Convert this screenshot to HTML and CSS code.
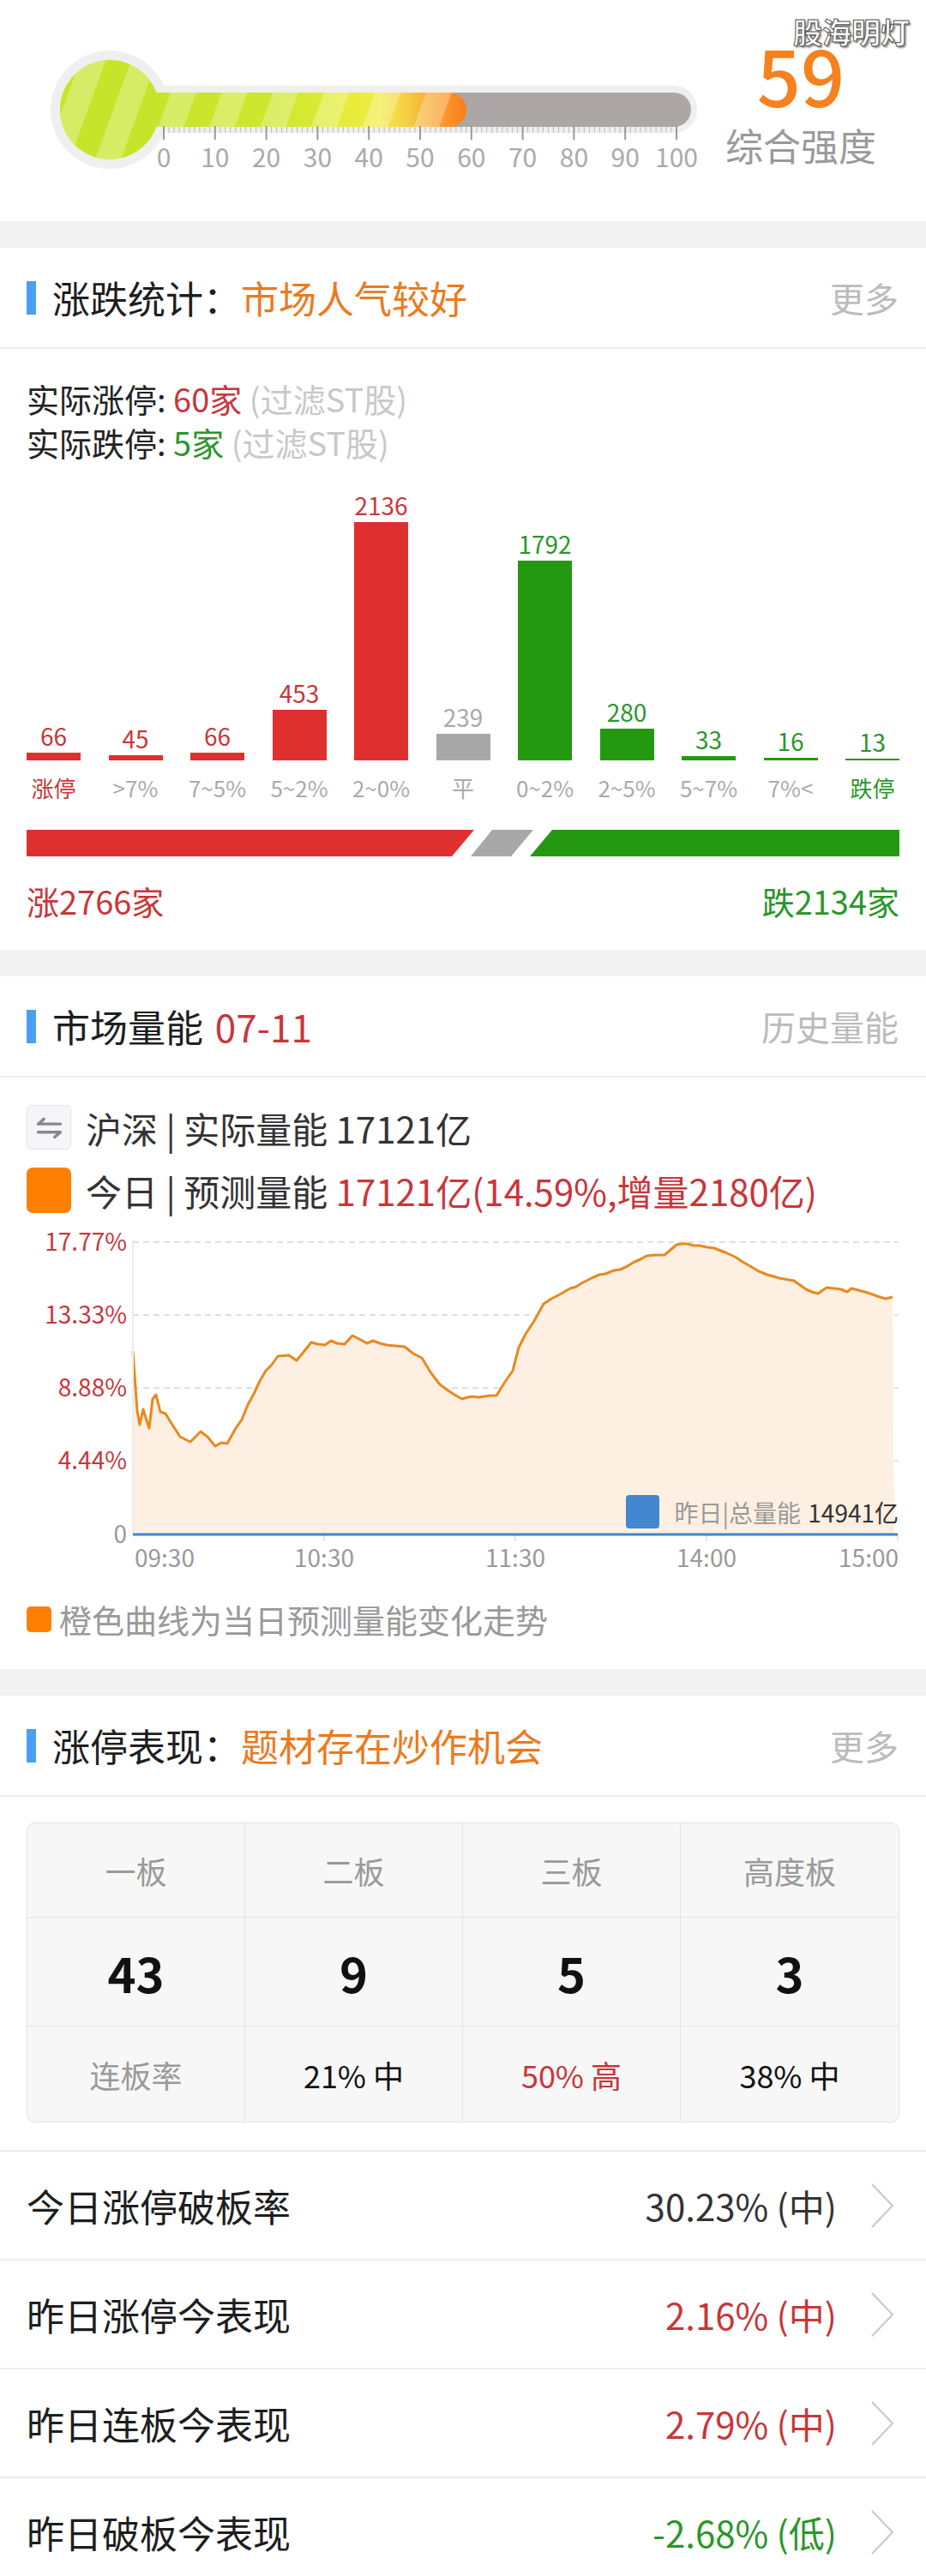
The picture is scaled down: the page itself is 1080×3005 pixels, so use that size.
FILE: index.html
```html
<!DOCTYPE html>
<html lang="zh-CN">
<head>
    <meta charset="UTF-8">
    <meta name="viewport" content="width=device-width, initial-scale=1.0">
    <title>市场情绪</title>
    <link rel="stylesheet" href="styles.css">
</head>
<body>
<div class="page">

    <!-- 综合强度 -->
    <section class="gauge">
        <svg class="thermo" viewBox="0 0 820 258">
            <defs>
                <linearGradient id="heat" x1="180" y1="0" x2="544" y2="0" gradientUnits="userSpaceOnUse">
                    <stop offset="0" stop-color="#c6e52a"/>
                    <stop offset="0.4" stop-color="#cde72d"/>
                    <stop offset="0.6" stop-color="#e4ec36"/>
                    <stop offset="0.72" stop-color="#f2eb44"/>
                    <stop offset="0.8" stop-color="#f5d245"/>
                    <stop offset="0.9" stop-color="#f8a432"/>
                    <stop offset="1" stop-color="#fb7c1b"/>
                </linearGradient>
                <pattern id="stripes" width="56" height="56" patternUnits="userSpaceOnUse" patternTransform="rotate(20)">
                    <rect width="28" height="56" fill="#fff" opacity="0.28"/>
                </pattern>
                <pattern id="ticks" x="190.5" y="0" width="5.98" height="8" patternUnits="userSpaceOnUse">
                    <rect width="1" height="8" fill="#bbb"/>
                </pattern>
            </defs>
            <circle cx="128" cy="128" r="69" fill="#efefef"/>
            <rect x="160" y="100" width="653" height="55" rx="27" fill="#efefef"/>
            <rect x="180" y="108" width="626" height="40" rx="20" fill="#aca6a6"/>
            <rect x="160" y="108" width="384" height="40" rx="20" fill="url(#heat)"/>
            <rect x="160" y="108" width="384" height="40" rx="20" fill="url(#stripes)"/>
            <circle cx="128" cy="128" r="58" fill="#c6e52a"/>
            <circle cx="128" cy="128" r="58" fill="url(#stripes)"/>
            <rect x="190" y="148" width="600" height="7" fill="url(#ticks)"/>
            <path d="M191 147v16M250.8 147v16M310.6 147v16M370.4 147v16M430.2 147v16M490 147v16M549.8 147v16M609.6 147v16M669.4 147v16M729.2 147v16M789 147v16" stroke="#999" stroke-width="2"/>
            <g class="thermo-num">
                <text x="191" y="195">0</text>
                <text x="250.8" y="195">10</text>
                <text x="310.6" y="195">20</text>
                <text x="370.4" y="195">30</text>
                <text x="430.2" y="195">40</text>
                <text x="490" y="195">50</text>
                <text x="549.8" y="195">60</text>
                <text x="609.6" y="195">70</text>
                <text x="669.4" y="195">80</text>
                <text x="729.2" y="195">90</text>
                <text x="789" y="195">100</text>
            </g>
        </svg>
        <div class="score">
            <div class="score-num">59</div>
            <div class="score-label">综合强度</div>
        </div>
        <div class="watermark">股海明灯</div>
    </section>

    <div class="gap"></div>

    <!-- 涨跌统计 -->
    <section class="card">
        <div class="card-head">
            <div class="card-title">涨跌统计：<span class="orange">市场人气较好</span></div>
            <div class="more">更多</div>
        </div>
        <div class="card-body updown">
            <p class="stat-line">实际涨停: <span class="red">60家</span> <span class="muted">(过滤ST股)</span></p>
            <p class="stat-line">实际跌停: <span class="green">5家</span> <span class="muted">(过滤ST股)</span></p>

            <div class="bars">
                <div class="bar-col"><span class="bar-num red">66</span><div class="bar up" style="height:9px"></div></div>
                <div class="bar-col"><span class="bar-num red">45</span><div class="bar up" style="height:6px"></div></div>
                <div class="bar-col"><span class="bar-num red">66</span><div class="bar up" style="height:9px"></div></div>
                <div class="bar-col"><span class="bar-num red">453</span><div class="bar up" style="height:59px"></div></div>
                <div class="bar-col"><span class="bar-num red">2136</span><div class="bar up" style="height:278px"></div></div>
                <div class="bar-col"><span class="bar-num gray">239</span><div class="bar flat" style="height:31px"></div></div>
                <div class="bar-col"><span class="bar-num green">1792</span><div class="bar down" style="height:233px"></div></div>
                <div class="bar-col"><span class="bar-num green">280</span><div class="bar down" style="height:37px"></div></div>
                <div class="bar-col"><span class="bar-num green">33</span><div class="bar down" style="height:5px"></div></div>
                <div class="bar-col"><span class="bar-num green">16</span><div class="bar down" style="height:3px"></div></div>
                <div class="bar-col"><span class="bar-num green">13</span><div class="bar down" style="height:2px"></div></div>
            </div>
            <div class="bar-labels">
                <span class="red">涨停</span>
                <span>&gt;7%</span>
                <span>7~5%</span>
                <span>5~2%</span>
                <span>2~0%</span>
                <span>平</span>
                <span>0~2%</span>
                <span>2~5%</span>
                <span>5~7%</span>
                <span>7%&lt;</span>
                <span class="green">跌停</span>
            </div>

            <svg class="ratio" viewBox="0 0 1018 31" preserveAspectRatio="none">
                <polygon points="0,0 522,0 496,31 0,31" fill="#e02f2f"/>
                <polygon points="543,0 591,0 565,31 518,31" fill="#a8a8a8"/>
                <polygon points="613,0 1018,0 1018,31 587,31" fill="#259812"/>
            </svg>

            <div class="totals">
                <span class="red">涨2766家</span>
                <span class="green">跌2134家</span>
            </div>
        </div>
    </section>

    <div class="gap"></div>

    <!-- 市场量能 -->
    <section class="card">
        <div class="card-head">
            <div class="card-title">市场量能 <span class="red date">07-11</span></div>
            <div class="more">历史量能</div>
        </div>
        <div class="card-body volume">
            <div class="vol-row">
                <span class="vol-icon">
                    <svg viewBox="0 0 52 52" width="52" height="52">
                        <path d="M13 22H40M13 22L20 16M13 32H40M40 32L33 38" stroke="#888" stroke-width="3.5" stroke-linecap="round" fill="none"/>
                    </svg>
                </span>
                <span>沪深 | 实际量能 17121亿</span>
            </div>
            <div class="vol-row">
                <span class="vol-box"></span>
                <span>今日 | 预测量能 <span class="red">17121亿(14.59%,增量2180亿)</span></span>
            </div>

            <svg class="vol-chart" viewBox="0 -10 1018 430">
                <g stroke="#e0e0e0" stroke-width="2" stroke-dasharray="7 5">
                    <line x1="124" y1="20" x2="1016" y2="20"/>
                    <line x1="124" y1="105" x2="1016" y2="105"/>
                    <line x1="124" y1="190" x2="1016" y2="190"/>
                    <line x1="124" y1="275" x2="1016" y2="275"/>
                </g>
                <path class="vol-area" d="M124,361 L124,147 129,217 132,233 136,215 140,228 143,237 147,203 151,198 156,218 162,220 170,233 179,247 191,253 203,241 211,247 220,258 227,254 234,255 244,237 251,227 258,210 265,197 272,182 279,170 286,163 293,153 306,152 315,158 324,147 332,137 340,139 348,140 355,135 362,138 371,139 380,129 388,133 397,138 404,135 412,138 420,140 430,141 441,142 451,150 461,155 467,165 472,173 482,186 490,192 499,198 508,203 514,201 520,200 527,201 534,200 541,199 548,199 558,183 567,170 574,143 582,127 592,112 603,92 612,86 620,82 627,78 634,74 641,72 647,68 655,64 661,61 668,58 675,57 685,53 692,52 699,49 709,43 716,40 723,36 733,35 744,35 751,29 758,23 765,22 771,22 778,24 785,24 794,26 802,27 815,32 826,37 835,43 844,48 854,54 864,58 878,62 895,65 902,70 909,75 916,78 923,80 933,73 942,74 950,75 957,78 962,74 970,76 981,79 992,83 1002,86 1010,84 L1012,361 Z" fill="#fdefe2"/>
                <path class="vol-line" d="M124,147 129,217 132,233 136,215 140,228 143,237 147,203 151,198 156,218 162,220 170,233 179,247 191,253 203,241 211,247 220,258 227,254 234,255 244,237 251,227 258,210 265,197 272,182 279,170 286,163 293,153 306,152 315,158 324,147 332,137 340,139 348,140 355,135 362,138 371,139 380,129 388,133 397,138 404,135 412,138 420,140 430,141 441,142 451,150 461,155 467,165 472,173 482,186 490,192 499,198 508,203 514,201 520,200 527,201 534,200 541,199 548,199 558,183 567,170 574,143 582,127 592,112 603,92 612,86 620,82 627,78 634,74 641,72 647,68 655,64 661,61 668,58 675,57 685,53 692,52 699,49 709,43 716,40 723,36 733,35 744,35 751,29 758,23 765,22 771,22 778,24 785,24 794,26 802,27 815,32 826,37 835,43 844,48 854,54 864,58 878,62 895,65 902,70 909,75 916,78 923,80 933,73 942,74 950,75 957,78 962,74 970,76 981,79 992,83 1002,86 1010,84" fill="none" stroke="#e8891f" stroke-width="3" stroke-linejoin="round"/>
                <line x1="124" y1="18" x2="124" y2="361" stroke="#ececec" stroke-width="2"/>
                <g stroke="#e6e6e6" stroke-width="2">
                    <line x1="347" y1="361" x2="347" y2="369"/>
                    <line x1="570" y1="361" x2="570" y2="369"/>
                    <line x1="793" y1="361" x2="793" y2="369"/>
                    <line x1="1016" y1="361" x2="1016" y2="369"/>
                </g>
                <line x1="124" y1="361" x2="1016" y2="361" stroke="#3c87cf" stroke-width="3"/>
                <g class="axis-y">
                    <text x="117" y="30">17.77%</text>
                    <text x="117" y="115">13.33%</text>
                    <text x="117" y="200">8.88%</text>
                    <text x="117" y="285">4.44%</text>
                    <text x="117" y="371" class="zero">0</text>
                </g>
                <g class="axis-x">
                    <text x="126" y="399">09:30</text>
                    <text x="347" y="399" text-anchor="middle">10:30</text>
                    <text x="570" y="399" text-anchor="middle">11:30</text>
                    <text x="793" y="399" text-anchor="middle">14:00</text>
                    <text x="1017" y="399" text-anchor="end">15:00</text>
                </g>
                <rect x="699" y="315" width="39" height="39" rx="4" fill="#4287cf"/>
                <text class="legend" x="903" y="347" text-anchor="end">昨日|总量能</text>
                <text class="legend dark" x="1017" y="347" text-anchor="end">14941亿</text>
            </svg>

            <div class="vol-note"><span class="note-dot"></span>橙色曲线为当日预测量能变化走势</div>
        </div>
    </section>

    <div class="gap"></div>

    <!-- 涨停表现 -->
    <section class="card">
        <div class="card-head">
            <div class="card-title">涨停表现：<span class="orange">题材存在炒作机会</span></div>
            <div class="more">更多</div>
        </div>
        <div class="card-body limit">
            <div class="board-table">
                <div class="cell head">一板</div>
                <div class="cell head">二板</div>
                <div class="cell head">三板</div>
                <div class="cell head">高度板</div>
                <div class="cell big">43</div>
                <div class="cell big">9</div>
                <div class="cell big">5</div>
                <div class="cell big">3</div>
                <div class="cell head">连板率</div>
                <div class="cell">21% 中</div>
                <div class="cell red">50% 高</div>
                <div class="cell">38% 中</div>
            </div>
        </div>

        <ul class="perf-list">
            <li>
                <span class="perf-name">今日涨停破板率</span>
                <span class="perf-val">30.23% (中)</span>
                <svg class="chevron" viewBox="0 0 28 54"><polyline points="2,2 26,27 2,52" fill="none" stroke="#c8c8c8" stroke-width="2"/></svg>
            </li>
            <li>
                <span class="perf-name">昨日涨停今表现</span>
                <span class="perf-val up">2.16% (中)</span>
                <svg class="chevron" viewBox="0 0 28 54"><polyline points="2,2 26,27 2,52" fill="none" stroke="#c8c8c8" stroke-width="2"/></svg>
            </li>
            <li>
                <span class="perf-name">昨日连板今表现</span>
                <span class="perf-val up">2.79% (中)</span>
                <svg class="chevron" viewBox="0 0 28 54"><polyline points="2,2 26,27 2,52" fill="none" stroke="#c8c8c8" stroke-width="2"/></svg>
            </li>
            <li>
                <span class="perf-name">昨日破板今表现</span>
                <span class="perf-val down">-2.68% (低)</span>
                <svg class="chevron" viewBox="0 0 28 54"><polyline points="2,2 26,27 2,52" fill="none" stroke="#c8c8c8" stroke-width="2"/></svg>
            </li>
        </ul>
    </section>

</div>
</body>
</html>
```

FILE: styles.css
```css
body {
    margin: 0;
    background: #fff;
    font-family: "Noto Sans CJK SC", "Noto Sans", sans-serif;
    color: #222;
}

.page {
    width: 1080px;
}

.red { color: #c9363a; }
.green { color: #2b962b; }
.orange { color: #eb7a1e; }
.gray { color: #aaa; }
.muted { color: #c8c8c8; }

.gap {
    height: 31px;
    background: #f2f2f2;
}

/* gauge */
.gauge {
    position: relative;
    height: 258px;
    display: flex;
}

.thermo {
    width: 820px;
    height: 258px;
    flex: none;
}

.thermo-num text {
    font-size: 30px;
    fill: #aaa;
    text-anchor: middle;
}

.score {
    flex: 1;
    text-align: center;
    padding-right: 32px;
    padding-top: 56px;
}

.score-num {
    font-size: 90px;
    line-height: 60px;
    font-weight: 500;
    color: #f5821f;
}

.score-label {
    font-size: 44px;
    line-height: 50px;
    color: #9a9a9a;
    margin-top: 28px;
}

.watermark {
    position: absolute;
    top: 19px;
    right: 19px;
    font-size: 34px;
    line-height: 36px;
    font-weight: bold;
    color: #fff;
    -webkit-text-stroke: 1px #555;
    text-shadow: 2px 2px 2px rgba(0, 0, 0, 0.45);
}

/* card */
.card-head {
    height: 116px;
    border-bottom: 2px solid #eeeeee;
    display: flex;
    align-items: center;
    justify-content: space-between;
    padding: 0 32px 0 31px;
}

.card-title {
    display: flex;
    align-items: center;
    font-size: 44px;
    color: #1e1e1e;
    white-space: pre;
}

.card-title::before {
    content: "";
    width: 11px;
    height: 39px;
    background: #4a9ff5;
    margin-right: 19px;
}

.more {
    font-size: 40px;
    color: #bbb;
}

.card-body {
    padding: 32px 31px 32px;
}

/* 涨跌统计 */
.stat-line {
    margin: 0;
    font-size: 38px;
    line-height: 51px;
}

.bars {
    height: 346px;
    display: flex;
    justify-content: space-between;
    align-items: flex-end;
}

.bar-col {
    width: 63px;
    display: flex;
    flex-direction: column;
    align-items: center;
}

.bar-num {
    font-size: 28px;
    line-height: 30px;
    margin-bottom: 5px;
}

.bar {
    width: 63px;
}

.bar.up { background: #e02f2f; }
.bar.flat { background: #a8a8a8; }
.bar.down { background: #259812; }

.bar-labels {
    display: flex;
    justify-content: space-between;
    margin-top: 16px;
}

.bar-labels span {
    width: 63px;
    display: flex;
    justify-content: center;
    font-size: 26px;
    line-height: 32px;
    white-space: nowrap;
    color: #aaa;
}

.bar-labels span.red { color: #c9363a; }
.bar-labels span.green { color: #2b962b; }

.ratio {
    display: block;
    width: 1018px;
    height: 31px;
    margin-top: 33px;
}

.totals {
    display: flex;
    justify-content: space-between;
    margin-top: 27px;
    font-size: 38px;
    line-height: 50px;
}

/* 市场量能 */
.date {
    margin-left: 4px;
}

.vol-row {
    display: flex;
    align-items: center;
    height: 52px;
    font-size: 42px;
    color: #333;
    white-space: pre;
}

.vol-row + .vol-row {
    margin-top: 21px;
    height: 53px;
}

.vol-icon {
    width: 50px;
    height: 50px;
    border: 1px solid #e2e2e8;
    border-radius: 6px;
    background: #f6f6fa;
    margin-right: 17px;
    display: flex;
}

.vol-icon svg {
    width: 50px;
    height: 50px;
}

.vol-box {
    width: 52px;
    height: 53px;
    border-radius: 7px;
    background: #ff7f00;
    margin-right: 17px;
}

.vol-chart {
    display: block;
    width: 1018px;
    height: 430px;
    margin-top: 4px;
}

.axis-y text {
    font-size: 28px;
    fill: #c9363a;
    text-anchor: end;
}

.axis-y text.zero {
    fill: #999;
}

.axis-x text {
    font-size: 28px;
    fill: #999;
}

.legend {
    font-size: 28px;
    fill: #999;
}

.legend.dark {
    fill: #333;
}

.vol-note {
    display: flex;
    align-items: center;
    margin-top: 14px;
    font-size: 38px;
    line-height: 52px;
    color: #999;
}

.note-dot {
    width: 29px;
    height: 30px;
    border-radius: 5px;
    background: #ff7f00;
    margin-right: 9px;
}

/* 涨停表现 */
.card-body.limit {
    padding: 30px 31px 32px;
}

.board-table {
    display: grid;
    grid-template-columns: repeat(4, 1fr);
    grid-template-rows: 110px 127px 111px;
    border: 1px solid #e2e2e8;
    border-radius: 10px;
    background: #f7f7f7;
    overflow: hidden;
}

.cell {
    display: flex;
    align-items: center;
    justify-content: center;
    border-right: 1px solid #e2e2e8;
    border-bottom: 1px solid #e2e2e8;
    font-size: 36px;
    color: #111;
}

.cell:nth-child(4n) {
    border-right: none;
}

.cell:nth-child(n+9) {
    border-bottom: none;
}

.cell.head {
    color: #9a9a9a;
}

.cell.big {
    font-size: 56px;
    font-weight: bold;
}

.cell.red {
    color: #c9363a;
}

.perf-list {
    list-style: none;
    margin: 0;
    padding: 0;
}

.perf-list li {
    height: 125px;
    border-top: 2px solid #eeeeee;
    display: flex;
    align-items: center;
    padding: 0 37px 0 31px;
}

.perf-name {
    flex: 1;
    font-size: 44px;
    color: #1e1e1e;
}

.perf-val {
    font-size: 42px;
    color: #333;
    margin-right: 39px;
}

.perf-val.up { color: #c9363a; }
.perf-val.down { color: #2b962b; }

.chevron {
    width: 28px;
    height: 54px;
}
```
